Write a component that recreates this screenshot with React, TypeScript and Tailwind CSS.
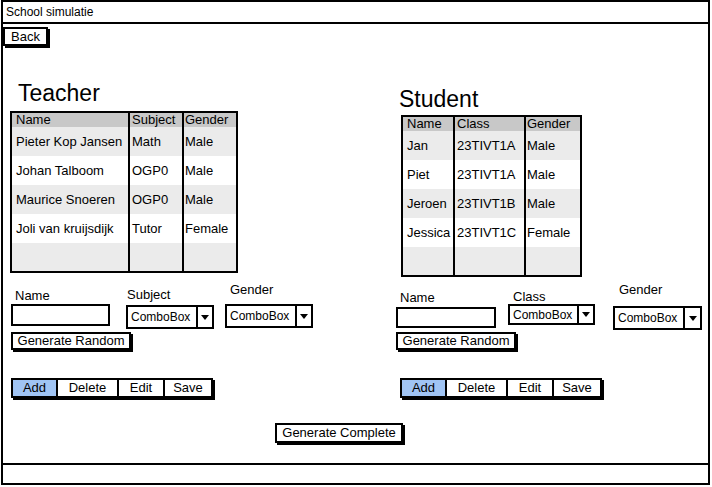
import React from "react";

const F = "font-['Liberation_Sans',Arial,sans-serif]";

function Btn({ label, className = "" }: { label: string; className?: string }) {
  return (
    <div
      className={`border-2 border-black bg-white shadow-[2px_2px_0_0_#000] flex items-center justify-center text-[13px] leading-[14px] text-black ${className}`}
    >
      {label}
    </div>
  );
}

function Arrow() {
  return (
    <svg width="8" height="5" viewBox="0 0 8 5">
      <polygon points="0,0 8,0 4,5" fill="#000" />
    </svg>
  );
}

function Combo({ className = "", arrowW = "w-[16px]" }: { className?: string; arrowW?: string }) {
  return (
    <div className={`border-2 border-black bg-white flex ${className}`}>
      <div className="flex-1 flex items-center pl-[3px] text-[12px] leading-[14px] text-black">ComboBox</div>
      <div className={`border-l-2 border-black flex items-center justify-center ${arrowW}`}>
        <Arrow />
      </div>
    </div>
  );
}

type TableProps = {
  headers: string[];
  rows: string[][];
  colW: string[];
  pads: string[];
  className: string;
};

function Table({ headers, rows, colW, pads, className }: TableProps) {
  const bgs = ["bg-[#ebebeb]", "bg-white", "bg-[#ebebeb]", "bg-white", "bg-[#ebebeb]"];
  const allRows = [...rows, ["", "", ""]];
  return (
    <div className={`border-2 border-black flex flex-col ${className}`}>
      <div className="flex h-[14px] bg-[#c8c8c8]">
        {headers.map((h, i) => (
          <div
            key={i}
            className={`${colW[i]} ${i < 2 ? "border-r-2 border-black" : ""} ${pads[i]} text-[13px] leading-[14px] text-black`}
          >
            {h}
          </div>
        ))}
      </div>
      {allRows.map((r, ri) => (
        <div key={ri} className={`flex ${ri === 4 ? "flex-1" : "h-[29px]"} ${bgs[ri]}`}>
          {r.map((c, i) => (
            <div
              key={i}
              className={`${colW[i]} ${i < 2 ? "border-r-2 border-black" : ""} ${pads[i]} flex items-center text-[13px] leading-[15px] text-black whitespace-nowrap`}
            >
              {c}
            </div>
          ))}
        </div>
      ))}
    </div>
  );
}

function ButtonGroup({ className = "" }: { className?: string }) {
  return (
    <div className={`flex h-[20px] border-2 border-black shadow-[2px_2px_0_0_#000] bg-white text-[13px] leading-[14px] text-black ${className}`}>
      <div className="w-[43px] bg-[#a0c4f4] flex items-center justify-center">Add</div>
      <div className="w-[61px] border-l-2 border-black flex items-center justify-center">Delete</div>
      <div className="w-[46px] border-l-2 border-black flex items-center justify-center">Edit</div>
      <div className="w-[48px] border-l-2 border-black flex items-center justify-center">Save</div>
    </div>
  );
}

export default function App() {
  return (
    <div className={`w-[712px] h-[487px] bg-white ${F} text-black`}>
      <div className="ml-[1px] w-[709px] h-[485px] border-2 border-black flex flex-col">
        <div className="h-[22px] border-b-2 border-black flex items-center pl-[3px] text-[12px] leading-[14px]">
          School simulatie
        </div>
        <div className="flex-1 flex flex-col">
          <Btn label="Back" className="mt-[3px] w-[45px] h-[19px] text-[12px]" />
          <div className="flex items-start">
            {/* Teacher */}
            <div className="ml-[7px] w-[385px] flex flex-col items-start">
              <div className="mt-[36px] ml-[8px] h-[23px] text-[23px] leading-[23px]">Teacher</div>
              <Table
                className="mt-[6px] w-[228px] h-[162px]"
                headers={["Name", "Subject", "Gender"]}
                rows={[
                  ["Pieter Kop Jansen", "Math", "Male"],
                  ["Johan Talboom", "OGP0", "Male"],
                  ["Maurice Snoeren", "OGP0", "Male"],
                  ["Joli van kruijsdijk", "Tutor", "Female"],
                ]}
                colW={["w-[118px]", "w-[54px]", "flex-1"]}
                pads={["pl-[4px]", "pl-[2px]", "pl-[1px]"]}
              />
              <div className="mt-[9px] ml-[1px] flex items-start">
                <div className="w-[99px] flex flex-col">
                  <div className="mt-[6px] ml-[4px] h-[15px] text-[13px] leading-[15px]">Name</div>
                  <div className="mt-[1px] h-[22px] w-[99px] border-2 border-black bg-white" />
                </div>
                <div className="ml-[16px] flex flex-col">
                  <div className="mt-[5px] ml-[1px] h-[15px] text-[13px] leading-[15px]">Subject</div>
                  <Combo className="mt-[3px] w-[88px] h-[24px]" />
                </div>
                <div className="ml-[11px] flex flex-col">
                  <div className="ml-[5px] h-[15px] text-[13px] leading-[15px]">Gender</div>
                  <Combo className="mt-[7px] w-[88px] h-[24px]" />
                </div>
              </div>
              <Btn label="Generate Random" className="mt-[3px] ml-[1px] w-[120px] h-[18px]" />
              <ButtonGroup className="mt-[28px] ml-[1px]" />
            </div>
            {/* Student */}
            <div className="flex flex-col items-start">
              <div className="mt-[42px] ml-[4px] h-[23px] text-[23px] leading-[23px]">Student</div>
              <Table
                className="mt-[4px] ml-[6px] w-[181px] h-[162px]"
                headers={["Name", "Class", "Gender"]}
                rows={[
                  ["Jan", "23TIVT1A", "Male"],
                  ["Piet", "23TIVT1A", "Male"],
                  ["Jeroen", "23TIVT1B", "Male"],
                  ["Jessica", "23TIVT1C", "Female"],
                ]}
                colW={["w-[52px]", "w-[71px]", "flex-1"]}
                pads={["pl-[4px]", "pl-[2px]", "pl-[1px]"]}
              />
              <div className="mt-[5px] ml-[1px] flex items-start">
                <div className="w-[100px] flex flex-col">
                  <div className="mt-[8px] ml-[4px] h-[15px] text-[13px] leading-[15px]">Name</div>
                  <div className="mt-[2px] h-[21px] w-[100px] border-2 border-black bg-white" />
                </div>
                <div className="ml-[12px] flex flex-col">
                  <div className="mt-[7px] ml-[5px] h-[15px] text-[13px] leading-[15px]">Class</div>
                  <Combo className="w-[87px] h-[21px]" />
                </div>
                <div className="ml-[18px] flex flex-col">
                  <div className="ml-[6px] h-[15px] text-[13px] leading-[15px]">Gender</div>
                  <Combo className="mt-[9px] w-[89px] h-[24px]" arrowW="w-[17px]" />
                </div>
              </div>
              <Btn label="Generate Random" className="mt-[2px] ml-[1px] w-[120px] h-[18px]" />
              <ButtonGroup className="mt-[28px] ml-[5px]" />
            </div>
          </div>
          <Btn label="Generate Complete" className="mt-[25px] ml-[272px] w-[128px] h-[20px]" />
          <div className="flex-1" />
        </div>
        <div className="h-[20px] border-t-2 border-black" />
      </div>
    </div>
  );
}
